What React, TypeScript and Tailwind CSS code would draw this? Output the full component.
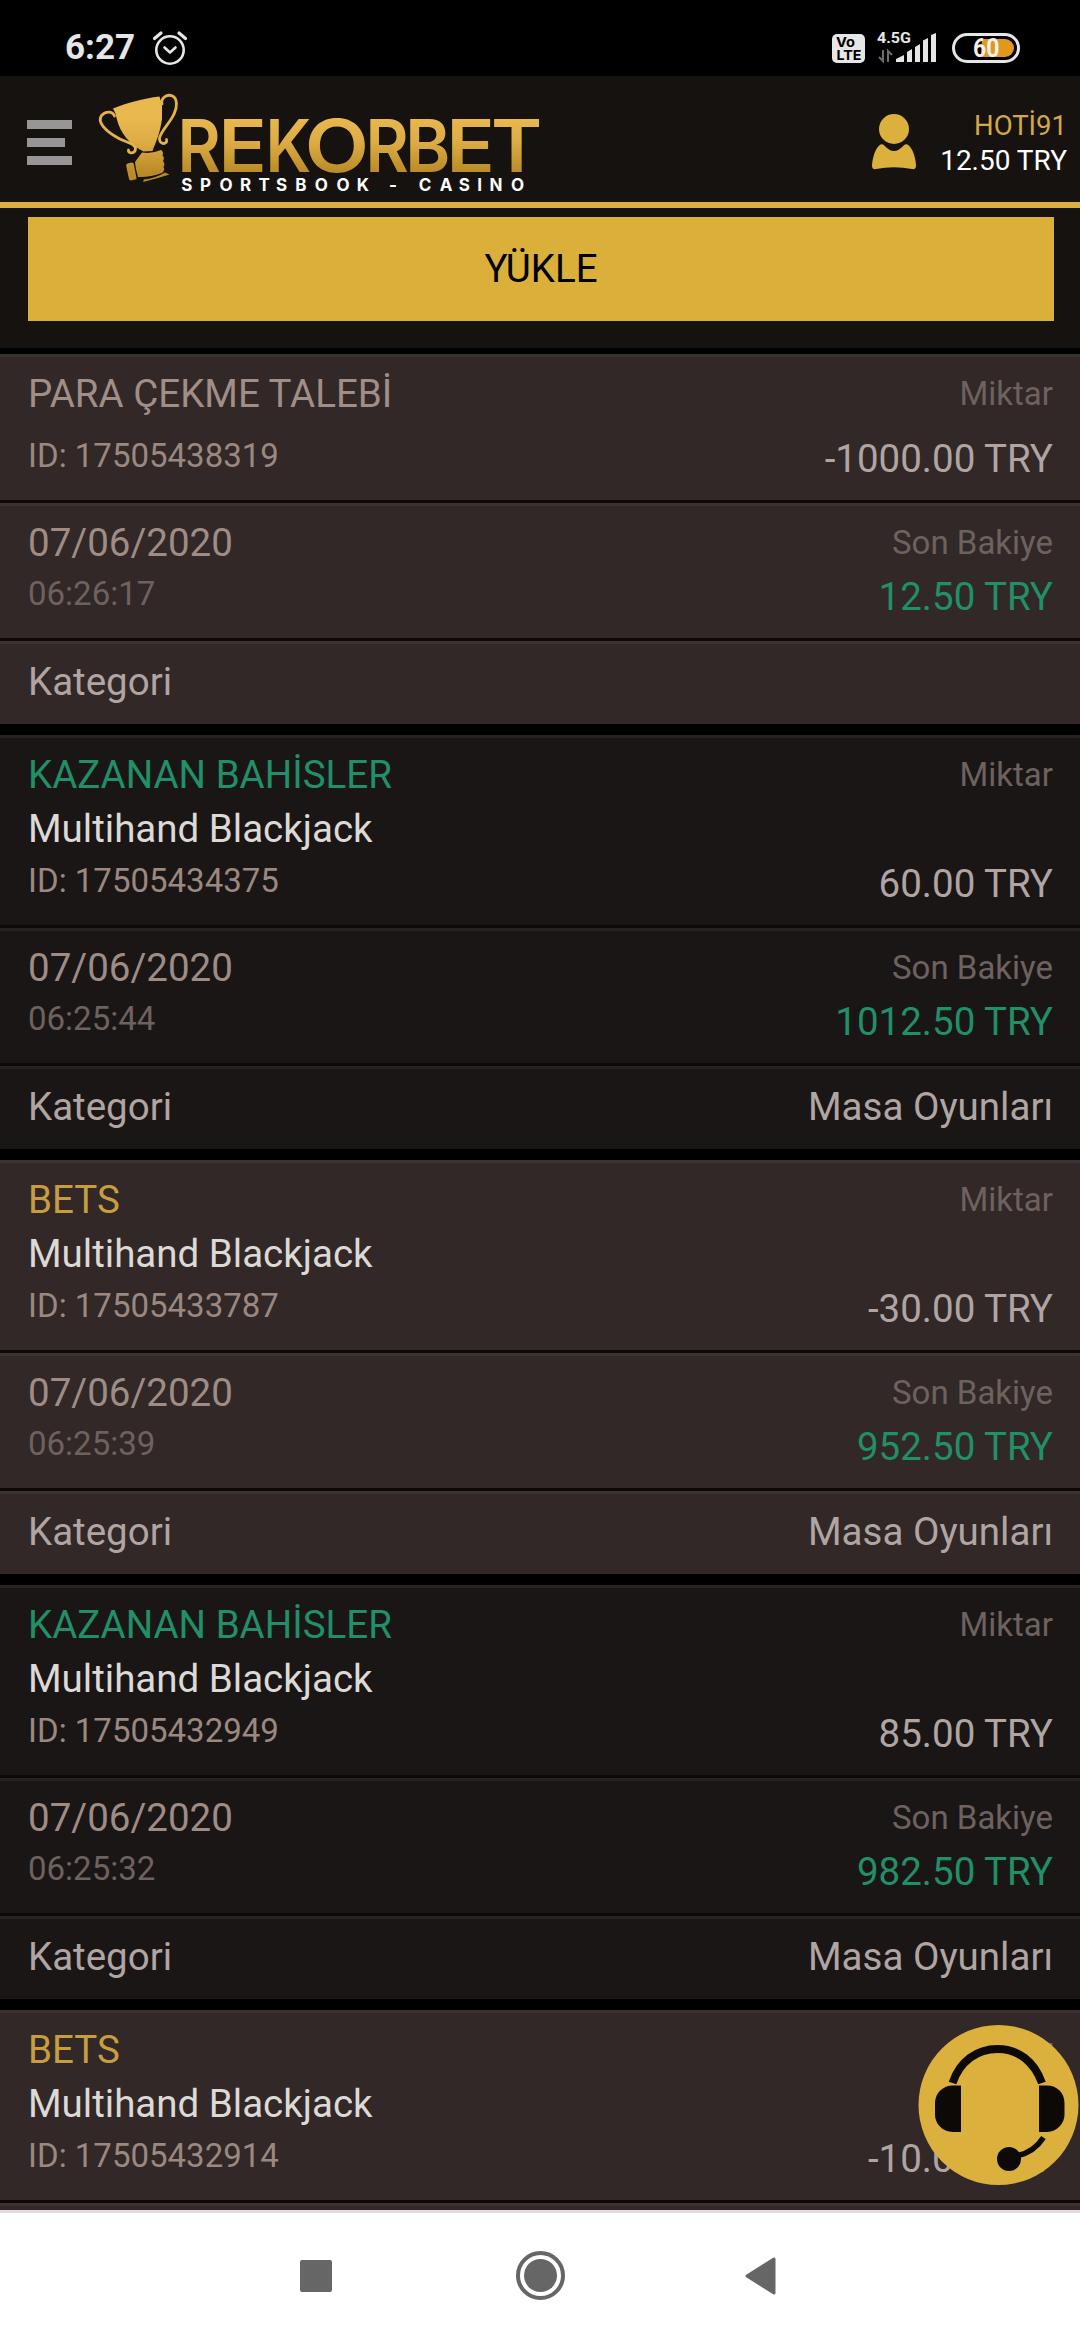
type Kind = "withdraw" | "win" | "bet";

interface Entry {
  kind: Kind;
  title: string;
  game?: string;
  id: string;
  amount: string;
  time?: string;
  balance?: string;
  category?: string;
}

const entries: Entry[] = [
  { kind: "withdraw", title: "PARA ÇEKME TALEBİ", id: "17505438319", amount: "-1000.00 TRY", time: "06:26:17", balance: "12.50 TRY" },
  { kind: "win", title: "KAZANAN BAHİSLER", game: "Multihand Blackjack", id: "17505434375", amount: "60.00 TRY", time: "06:25:44", balance: "1012.50 TRY", category: "Masa Oyunları" },
  { kind: "bet", title: "BETS", game: "Multihand Blackjack", id: "17505433787", amount: "-30.00 TRY", time: "06:25:39", balance: "952.50 TRY", category: "Masa Oyunları" },
  { kind: "win", title: "KAZANAN BAHİSLER", game: "Multihand Blackjack", id: "17505432949", amount: "85.00 TRY", time: "06:25:32", balance: "982.50 TRY", category: "Masa Oyunları" },
  { kind: "bet", title: "BETS", game: "Multihand Blackjack", id: "17505432914", amount: "-10.00 TRY" },
];

const titleColor: Record<Kind, string> = {
  withdraw: "text-[#a08e87]",
  win: "text-[#218f68]",
  bet: "text-[#c79d40]",
};

function StatusBar() {
  return (
    <div className="flex h-[76px] shrink-0 items-start bg-black pl-[65px] pr-[60px] text-[#e6e6e6]">
      <span className="mt-[28px] text-[35px] font-bold leading-[40px]">6:27</span>
      <svg className="ml-[17px] mt-[30px]" width="36" height="36" viewBox="151 30 36 36" fill="none" stroke="#e6e6e6" strokeLinecap="round" strokeLinejoin="round">
        <circle cx="169" cy="50" r="13.7" strokeWidth="2.6" />
        <path d="M163.500 47.500l5.500 5 5.500-5" strokeWidth="2.6" />
        <path d="M153.500 38.500l6.500-5.500M184.500 38.500l-6.500-5.500" strokeWidth="3.200" />
      </svg>
      <div className="flex-1" />
      <svg className="mt-[30px]" width="188" height="36" viewBox="832 30 188 36">
        <rect x="832" y="34" width="33" height="29" rx="5" fill="#e6e6e6" />
        <g fill="#000" fontFamily="Inter, Roboto, sans-serif" fontWeight="700">
          <text x="836" y="46.500" fontSize="13.500" textLength="19" lengthAdjust="spacingAndGlyphs">Vo</text>
          <text x="836.500" y="60" fontSize="13.500" textLength="25" lengthAdjust="spacingAndGlyphs">LTE</text>
        </g>
        <text x="877" y="43" fontSize="15.500" fontWeight="700" fontFamily="Roboto, sans-serif" fill="#e6e6e6" textLength="34" lengthAdjust="spacingAndGlyphs">4.5G</text>
        <g fill="none" stroke="#6c6c6c" strokeWidth="2">
          <path d="M883 50v11l-4-4" />
          <path d="M888 62V51l4 4" />
        </g>
        <g fill="#e6e6e6">
          <path d="M896 62v-3l8-4v7z" />
          <path d="M907 62V52l5-3v13z" />
          <path d="M915 62V47l5-3v18z" />
          <path d="M923 62V40.500l5-2.500v24z" />
          <path d="M931 62V35l5-2v29z" />
        </g>
        <rect x="953.500" y="34.500" width="65" height="27" rx="13.500" fill="none" stroke="#e6e6e6" strokeWidth="3" />
        <path d="M982 39h23a9 9 0 0 1 0 18h-24z" fill="#e0981f" />
        <text x="973" y="57" fontSize="25.500" fontWeight="700" fontFamily="Roboto, sans-serif" fill="#f4f0e8" textLength="26.500" lengthAdjust="spacingAndGlyphs">60</text>
      </svg>
    </div>
  );
}

const wordmark = [
  { letter: "R", x: 177.4, width: 43.3 },
  { letter: "E", x: 218.3, width: 48.7 },
  { letter: "K", x: 265.4, width: 45.8 },
  { letter: "O", x: 304.8, width: 64.3 },
  { letter: "R", x: 365.4, width: 43.3 },
  { letter: "B", x: 405.2, width: 45.1 },
  { letter: "E", x: 446.3, width: 48.7 },
  { letter: "T", x: 490.9, width: 51.2 },
];

function Logo() {
  return (
    <svg width="448" height="108" viewBox="96 90 448 108">
      <defs>
        <linearGradient id="gold" gradientUnits="userSpaceOnUse" x1="0" y1="118" x2="0" y2="173">
          <stop offset="0" stopColor="#e9b84f" />
          <stop offset="0.45" stopColor="#dcab44" />
          <stop offset="1" stopColor="#b98a26" />
        </linearGradient>
      </defs>
      <path d="M113 108.500C127 103 143 98.500 159.500 96.500L160.500 100.500L162 101V119C160 133 156 142 152.500 151L143.500 151.500C130 145 120 133 116.500 118L115.500 113.500Z" fill="url(#gold)" />
      <g fill="none" stroke="#e3b24a" strokeWidth="2.8" strokeLinecap="round">
        <path d="M114.500 116C112.500 111 105.500 111 101.500 115.500C97 122 105 131 119 138.500C126 142.500 135 143 135.500 148.500C135.500 154 127.500 154 128.500 150" />
        <path d="M162 104C160.500 98 167 93.500 172.500 96C177.500 98.500 177.500 107 174 114C170 123 160 132 159.500 138.500C159 145 168 145 166.500 139.500" />
      </g>
      <g fill="url(#gold)">
        <path d="M142 152.500Q152 154 161 150Q164 152 162.500 155.500Q165 158 163 161Q165.500 164 163.500 167Q165.500 170 162 173Q150 177.500 138 177Q135.500 169 135 162Z" />
        <path d="M127.500 163.500L132 162.500Q133.500 162.500 133.800 164L136.500 178Q136.500 179.500 135 179.500L131 180.500Q129.500 180.500 129 179L126.200 166Q126 164 127.500 163.500Z" />
        <path d="M144 179.500Q155 178.500 165 172.500L169.500 174.500Q157 178.500 143 182Z" />
      </g>
      <text y="172" fontSize="73.5" fontWeight="600" fontFamily="Inter, sans-serif" fill="url(#gold)">
        {wordmark.map((g, i) => (
          <tspan key={i} x={g.x} textLength={g.width} lengthAdjust="spacingAndGlyphs">{g.letter}</tspan>
        ))}
      </text>
      <text x="181.300 200 219.500 240 258.500 276 295.200 314.800 336.500 356.800 374 389 402 418.700 439.700 458.700 477.300 489.500 511" y="191" fontSize="17" fontWeight="700" fontFamily="Inter, sans-serif" fill="#fff">
        SPORTSBOOK - CASINO
      </text>
    </svg>
  );
}

function Header() {
  return (
    <header className="flex h-[132px] shrink-0 items-start border-b-[6px] border-[#dbb03c] bg-[#161210] pl-[27px] pr-[13px]">
      <div className="mt-[44px] flex w-[45px] flex-col gap-[9px]">
        <div className="h-[9px] bg-[#979595]" />
        <div className="h-[9px] w-[38px] bg-[#979595]" />
        <div className="h-[9px] bg-[#979595]" />
      </div>
      <div className="ml-[24px] mt-[14px]">
        <Logo />
      </div>
      <div className="flex-1" />
      <svg className="mt-[37px]" width="46" height="57" viewBox="871 113 46 57" fill="#dbb03c">
        <circle cx="894" cy="129" r="15" />
        <path d="M881 144.300C885 143.500 887 151 894 151S903 143.500 907 144.300C913 147 916 160 916 166C916 168.500 914.500 169.500 912 169Q894 165.500 876 169C873.500 169.500 872 168.500 872 166C872 160 875 147 881 144.300Z" />
      </svg>
      <div className="ml-[23px] mt-[32px] flex flex-col items-end leading-[35px]">
        <span className="text-[27.500px] text-[#d3a847]">HOTİ91</span>
        <span className="text-[28px] text-white">12.50 TRY</span>
      </div>
    </header>
  );
}

function EntryCard({ entry }: { entry: Entry }) {
  const cell =
    entry.kind === "win"
      ? "flex justify-between pl-[28px] pr-[27px] border-t-[3px] border-[#262221] bg-[#1a1615]"
      : "flex justify-between pl-[28px] pr-[27px] border-t-[3px] border-[#3b3331] bg-[#312827]";
  return (
    <article className="flex shrink-0 flex-col gap-[3px] bg-[#0d0908] text-[38.5px] leading-[54px] text-[#b0a5a2]">
      <div className={`${cell} ${entry.game ? "h-[190px]" : "h-[146px]"} pt-[10px]`}>
        <div>
          <div className={titleColor[entry.kind]}>{entry.title}</div>
          {entry.game && <div className="text-[#dcd9d6]">{entry.game}</div>}
          <div className={`${entry.game ? "" : "mt-[10px]"} text-[33px] leading-[49px] text-[#9b8880]`}>ID: {entry.id}</div>
        </div>
        <div className="text-right">
          <div className="text-[33px] leading-[53px] text-[#6d625f]">Miktar</div>
          <div className={entry.game ? "mt-[56px]" : "mt-[12px]"}>{entry.amount}</div>
        </div>
      </div>
      <div className={`${cell} h-[135px] pt-[10px]`}>
        {entry.time && (
          <>
            <div>
              <div className="text-[#9f8c85]">07/06/2020</div>
              <div className="text-[33px] leading-[47px] text-[#6d625f]">{entry.time}</div>
            </div>
            <div className="text-right">
              <div className="text-[33px] leading-[53px] text-[#6d625f]">Son Bakiye</div>
              <div className="mt-[1px] text-[#218f68]">{entry.balance}</div>
            </div>
          </>
        )}
      </div>
      {entry.time && (
        <div className={`${cell} h-[83px] pt-[11px]`}>
          <span>Kategori</span>
          <span>{entry.category}</span>
        </div>
      )}
    </article>
  );
}

function SupportButton() {
  return (
    <button className="absolute left-[918px] top-[2025px] size-[161px]" aria-label="Destek">
      <svg width="161" height="161" viewBox="918 2025 161 161">
        <circle cx="998.500" cy="2105" r="80" fill="#dbb03c" />
        <path d="M952.500 2083C960 2061 977 2049 997.500 2049S1034 2061 1042 2083" fill="none" stroke="#0d0907" strokeWidth="8" />
        <path d="M961 2085.500v46.500h-8c-11 0-18-9-18-17v-12c0-10 8-17.500 18-17.500z" fill="#0d0907" />
        <path d="M1039 2085.500v46.500h8c10 0 17.500-9 17.500-17v-12c0-10-7.500-17.500-17.500-17.500z" fill="#0d0907" />
        <circle cx="1009" cy="2159" r="12" fill="#0d0907" />
        <path d="M1043.500 2137.500Q1034 2152 1018 2155.500" fill="none" stroke="#0d0907" strokeWidth="5.500" />
      </svg>
    </button>
  );
}

function NavBar() {
  return (
    <nav className="flex h-[130px] shrink-0 items-center border-t-[3px] border-[#e0dcdd] bg-white pb-[2px] pl-[300px]">
      <div className="size-[32px] rounded-[2px] bg-[#666]" />
      <div className="ml-[184px] flex size-[49px] items-center justify-center rounded-full border-4 border-[#666]">
        <div className="size-[33px] rounded-full bg-[#666]" />
      </div>
      <svg className="ml-[180px]" width="31" height="38" viewBox="0 0 31 38">
        <path d="M29 2v34L2 19z" fill="#666" stroke="#666" strokeWidth="3" strokeLinejoin="round" />
      </svg>
    </nav>
  );
}

export default function App() {
  return (
    <div className="relative flex h-[2340px] w-[1080px] flex-col overflow-hidden bg-black font-[Roboto,sans-serif]">
      <StatusBar />
      <Header />
      <main className="flex min-h-0 flex-1 flex-col overflow-hidden">
        <div className="h-[140px] shrink-0 bg-[#15120f] pl-[28px] pr-[26px] pt-[9px]">
          <button className="h-[104px] w-full bg-[#dbb03a] pb-[1px] text-[38.5px] text-black">YÜKLE</button>
        </div>
        <div className="mt-[6px] flex flex-col gap-[11px]">
          {entries.map((entry) => (
            <EntryCard key={entry.id} entry={entry} />
          ))}
        </div>
      </main>
      <NavBar />
      <SupportButton />
    </div>
  );
}
